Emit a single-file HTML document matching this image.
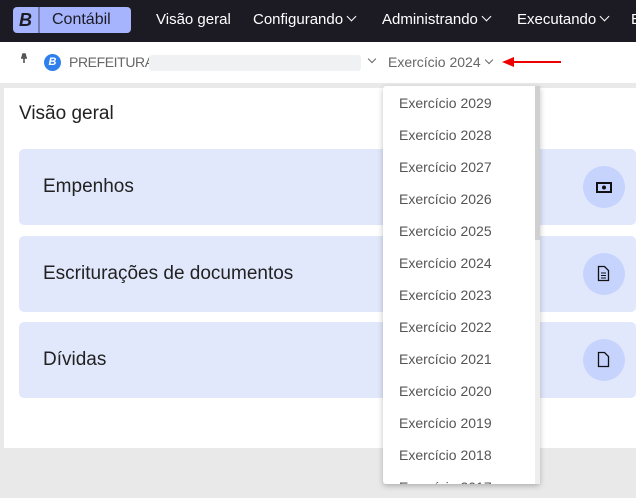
<!DOCTYPE html>
<html><head><meta charset="utf-8"><style>
*{margin:0;padding:0;box-sizing:border-box}
body{width:636px;height:498px;overflow:hidden;background:#e9e9e9;font-family:"Liberation Sans","DejaVu Sans",sans-serif;position:relative}
.nav{position:absolute;left:0;top:0;width:636px;height:42px;background:#1c1b24;color:#fff;font-size:15px}
.nav span{position:absolute;top:11px;white-space:nowrap;line-height:18px}
.logo{position:absolute;left:13px;top:7px;width:118px;height:26px;background:#a5b4fc;border-radius:4px}
.logo b{position:absolute;left:6px;top:3px;font-size:18px;line-height:20px;font-style:italic;color:#1c1b24;font-weight:900}
.logo i{position:absolute;left:25px;top:0;width:2px;height:26px;background:#1c1b24;opacity:.35}
.logo em{position:absolute;left:39px;top:4px;font-style:normal;font-size:16px;line-height:18px;color:#1c1b24}
.chev{display:inline-block;width:7px;height:7px;border-right:1.3px solid currentColor;border-bottom:1.3px solid currentColor;transform:rotate(45deg);margin-left:5px;position:relative;top:-4px}
.bc{position:absolute;left:0;top:42px;width:636px;height:41px;background:#fff;color:#666;font-size:14px}
.bc span{position:absolute;top:12px;line-height:17px;white-space:nowrap}
.panel{position:absolute;left:4px;top:88px;width:632px;height:360px;background:#fff}
.card{position:absolute;left:19px;width:617px;height:76px;background:#e2e8fc;border-radius:5px}
.card span{position:absolute;left:24px;top:27px;font-size:19px;line-height:22px;color:#222}
.card i{position:absolute;left:564px;top:17px;width:42px;height:42px;border-radius:50%;background:#c5d3fd}
.dd{position:absolute;left:383px;top:86px;width:157px;height:398px;background:#fff;box-shadow:0 2px 6px rgba(0,0,0,.25);overflow:hidden;border-radius:3px}
.dd div{position:absolute;left:16px;font-size:14px;line-height:17px;color:#555}
.sb{position:absolute;left:535px;top:86px;width:5px;height:398px;background:#eee}
.sbt{position:absolute;left:535px;top:86px;width:5px;height:154px;background:#d0d0d0}
</style></head><body>
<div class="nav">
<div class="logo"><b>B</b><i></i><em>Contábil</em></div>
<span style="left:156px">Visão geral</span>
<span style="left:253px">Configurando<i class="chev"></i></span>
<span style="left:382px">Administrando<i class="chev"></i></span>
<span style="left:517px">Executando<i class="chev"></i></span>
<span style="left:631px">E</span>
</div>
<div class="bc">
<span style="left:44px;top:12px;width:17px;height:17px;border-radius:50%;background:#2f80ed;color:#fff;font-size:11px;font-weight:bold;font-style:italic;text-align:center;line-height:17px">B</span>
<span style="left:69px;letter-spacing:-0.4px">PREFEITURA</span>
<span style="left:149px;top:13px;width:212px;height:16px;background:#f0f1f3;border-radius:3px"></span>
<span style="left:364px;font-size:12px"><i class="chev" style="width:6px;height:6px"></i></span>
<span style="left:388px">Exercício 2024<i class="chev" style="width:6px;height:6px"></i></span>
<span style="left:513px;top:19px;width:48px;height:2px;background:#e00"></span>
<span style="left:502px;top:15px;width:0;height:0;border-top:5px solid transparent;border-bottom:5px solid transparent;border-right:12px solid #e00"></span>
</div>
<div class="panel"><div style="position:absolute;left:15px;top:15px;font-size:19px;line-height:22px;color:#222">Visão geral</div></div>
<div class="card" style="top:149px"><span>Empenhos</span><i></i></div>
<div class="card" style="top:236px"><span>Escriturações de documentos</span><i></i></div>
<div class="card" style="top:322px"><span>Dívidas</span><i></i></div>
<svg style="position:absolute;left:0;top:0" width="636" height="498">
<path d="M21 58h6M22 58l1-4h2l1 4M24 58v5" stroke="#555" stroke-width="1.6" fill="#555"/>
<rect x="597" y="183" width="14" height="9" fill="none" stroke="#111" stroke-width="2"/><circle cx="604" cy="187.5" r="2" fill="#111"/>
<path d="M598.5 266.5h6l4 4v10h-10z" fill="none" stroke="#111" stroke-width="1.3"/><path d="M601 273h5M601 275.5h5M601 278h5" stroke="#111"/>
<path d="M598.5 352.5h6l4 4v10h-10z" fill="none" stroke="#111" stroke-width="1.3"/>
</svg>
<div class="dd">
<div style="top:9px">Exercício 2029</div>
<div style="top:41px">Exercício 2028</div>
<div style="top:73px">Exercício 2027</div>
<div style="top:105px">Exercício 2026</div>
<div style="top:137px">Exercício 2025</div>
<div style="top:169px">Exercício 2024</div>
<div style="top:201px">Exercício 2023</div>
<div style="top:233px">Exercício 2022</div>
<div style="top:265px">Exercício 2021</div>
<div style="top:297px">Exercício 2020</div>
<div style="top:329px">Exercício 2019</div>
<div style="top:361px">Exercício 2018</div>
<div style="top:393px">Exercício 2017</div>
</div>
<div class="sb"></div><div class="sbt"></div>
</body></html>
